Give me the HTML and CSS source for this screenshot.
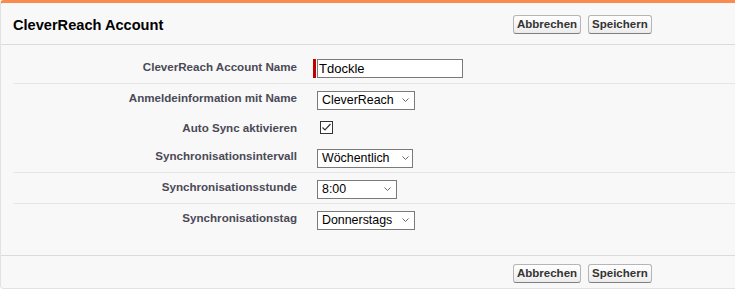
FILE: index.html
```html
<!DOCTYPE html>
<html lang="de">
<head>
    <meta charset="UTF-8">
    <meta name="viewport" content="width=device-width, initial-scale=1.0">
    <title>CleverReach Account</title>
    <link rel="stylesheet" href="styles.css">
</head>
<body>
    <div class="page-block">
        <div class="pb-header">
            <h2 class="pb-title">CleverReach Account</h2>
            <div class="pb-buttons">
                <button class="btn">Abbrechen</button>
                <button class="btn">Speichern</button>
            </div>
        </div>

        <div class="pb-body">
            <div class="row line">
                <label class="label-col" for="accountName">CleverReach Account Name</label>
                <div class="data-col">
                    <div class="required">
                        <span class="required-bar"></span>
                        <input type="text" id="accountName" class="text-input" value="Tdockle">
                    </div>
                </div>
            </div>

            <div class="row">
                <label class="label-col" for="credential">Anmeldeinformation mit Name</label>
                <div class="data-col">
                    <span class="select-wrap sel-credential">
                        <select id="credential">
                            <option>CleverReach</option>
                        </select>
                        <svg class="chevron" width="7" height="4" viewBox="0 0 7 4"><polyline points="0.5,0.5 3.5,3.5 6.5,0.5" fill="none" stroke="#666" stroke-width="1"/></svg>
                    </span>
                </div>
            </div>

            <div class="row">
                <span class="label-col">Auto Sync aktivieren</span>
                <div class="data-col">
                    <span class="checkbox">
                        <svg width="13" height="13" viewBox="0 0 13 13"><rect x="0.5" y="0.5" width="12" height="12" fill="#fff" stroke="#333"/><polyline points="2.5,6.5 5,9 10.5,3" fill="none" stroke="#333" stroke-width="1.2"/></svg>
                    </span>
                </div>
            </div>

            <div class="row line">
                <label class="label-col" for="interval">Synchronisationsintervall</label>
                <div class="data-col">
                    <span class="select-wrap sel-interval">
                        <select id="interval">
                            <option>Wöchentlich</option>
                        </select>
                        <svg class="chevron" width="7" height="4" viewBox="0 0 7 4"><polyline points="0.5,0.5 3.5,3.5 6.5,0.5" fill="none" stroke="#666" stroke-width="1"/></svg>
                    </span>
                </div>
            </div>

            <div class="row line">
                <label class="label-col" for="hour">Synchronisationsstunde</label>
                <div class="data-col">
                    <span class="select-wrap sel-hour">
                        <select id="hour">
                            <option>8:00</option>
                        </select>
                        <svg class="chevron" width="7" height="4" viewBox="0 0 7 4"><polyline points="0.5,0.5 3.5,3.5 6.5,0.5" fill="none" stroke="#666" stroke-width="1"/></svg>
                    </span>
                </div>
            </div>

            <div class="row">
                <label class="label-col" for="day">Synchronisationstag</label>
                <div class="data-col">
                    <span class="select-wrap sel-day">
                        <select id="day">
                            <option>Donnerstags</option>
                        </select>
                        <svg class="chevron" width="7" height="4" viewBox="0 0 7 4"><polyline points="0.5,0.5 3.5,3.5 6.5,0.5" fill="none" stroke="#666" stroke-width="1"/></svg>
                    </span>
                </div>
            </div>
        </div>

        <div class="pb-footer">
            <div class="pb-buttons">
                <button class="btn">Abbrechen</button>
                <button class="btn">Speichern</button>
            </div>
        </div>
    </div>
</body>
</html>
```

FILE: styles.css
```css
body {
    margin: 0;
    font-family: "Liberation Sans", Arial, sans-serif;
    overflow: hidden;
    background: #fff;
}

.page-block {
    margin-right: -10px;
    background: #f8f8f8;
    border: 1px solid #e0e3e5;
    border-top: 3px solid #f88b4d;
    border-radius: 4px;
}

.pb-header {
    display: grid;
    grid-template-columns: 500px auto;
    align-items: center;
    padding: 12px 0 10px 12px;
    border-bottom: 1px solid #dbdbdb;
}

.pb-title {
    margin: 0;
    font-size: 14.6px;
    font-weight: bold;
    color: #000;
}

.pb-buttons {
    display: flex;
    gap: 7px;
}

.btn {
    font-family: "Liberation Sans", Arial, sans-serif;
    font-size: 11.5px;
    font-weight: bold;
    color: #333;
    height: 19px;
    line-height: 15px;
    padding: 1px 3px;
    background: linear-gradient(#ffffff, #ececec);
    border: 1px solid #b5b5b5;
    border-bottom-color: #7f7f7f;
    border-radius: 3px;
}

.pb-body {
    padding: 8px 0 21px 0;
    border-bottom: 1px solid #dbdbdb;
}

.row {
    display: grid;
    grid-template-columns: 290px 1fr;
    margin-left: 12px;
}

.row.line {
    border-bottom: 1px solid #e6e6e6;
}

.label-col {
    text-align: right;
    padding: 7px 6px 0 0;
    font-size: 11.6px;
    font-weight: bold;
    line-height: 13px;
    color: #4a4a56;
}

.data-col {
    padding: 6px 0 5px 10px;
    display: flex;
    align-items: flex-start;
}

.required {
    display: flex;
    gap: 1px;
}

.required-bar {
    width: 3px;
    height: 19px;
    background: #c00000;
}

.text-input {
    box-sizing: border-box;
    width: 146px;
    height: 19px;
    margin: 0;
    padding: 0 1px;
    border: 1px solid #7a7a7a;
    background: #fff;
    font-family: "Liberation Sans", Arial, sans-serif;
    font-size: 13px;
    color: #000;
}

.select-wrap {
    position: relative;
    display: inline-block;
    margin-left: 4px;
    height: 19px;
}

.select-wrap select {
    appearance: none;
    -webkit-appearance: none;
    box-sizing: border-box;
    width: 100%;
    height: 19px;
    margin: 0;
    padding: 0 0 0 4px;
    border: 1px solid #7a7a7a;
    border-radius: 0;
    background: #fff;
    font-family: "Liberation Sans", Arial, sans-serif;
    font-size: 12.4px;
    color: #000;
}

.chevron {
    position: absolute;
    right: 6px;
    top: 8px;
    pointer-events: none;
}

.sel-credential { width: 98px; }
.sel-interval { width: 96px; }
.sel-interval .chevron { right: 4px; }
.sel-hour { width: 80px; }
.sel-day { width: 98px; }

.checkbox {
    display: block;
    width: 13px;
    height: 13px;
    margin: 1px 0 3px 7px;
}

.checkbox svg {
    display: block;
}

.pb-footer {
    display: grid;
    grid-template-columns: 500px auto;
    padding: 8px 0 5px 12px;
}

.pb-footer .pb-buttons {
    grid-column: 2;
}
```
